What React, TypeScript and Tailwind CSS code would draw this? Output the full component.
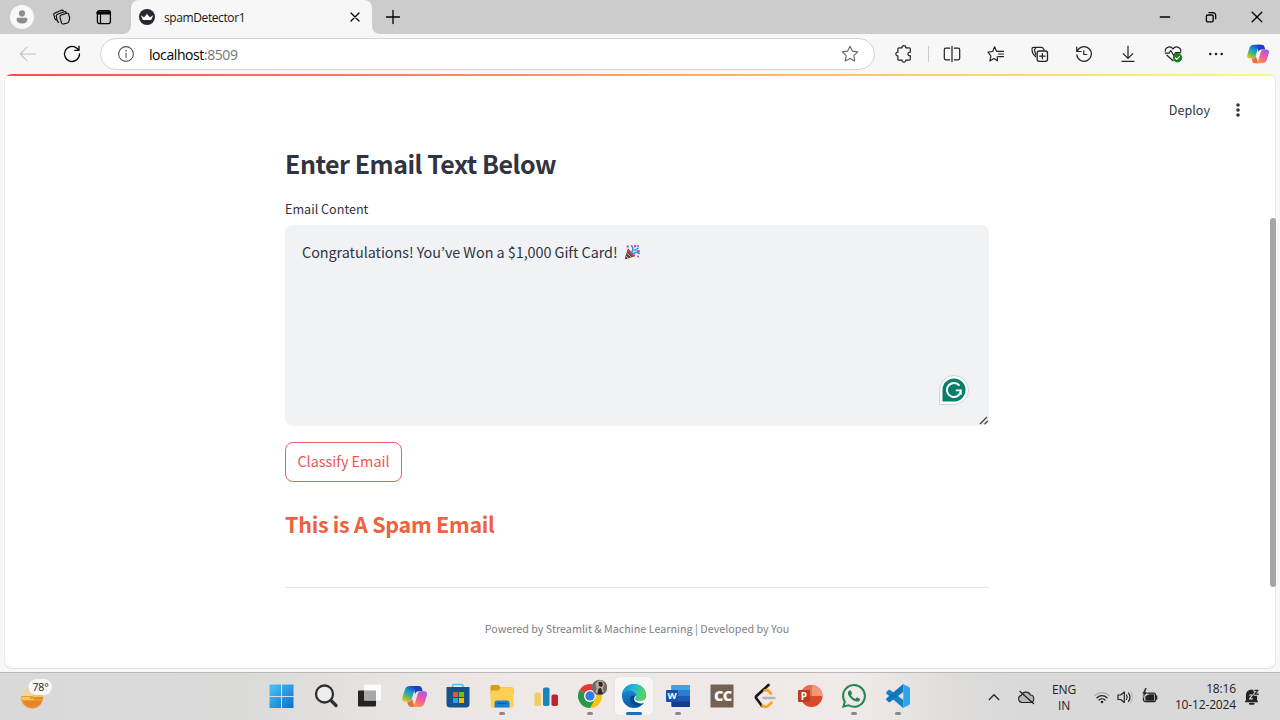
import React from "react";
import { BsWhatsapp } from "react-icons/bs";

type IconProps = { children: React.ReactNode; size?: number; className?: string; box?: string };

function Svg({ children, size = 20, className = "", box = "0 0 20 20" }: IconProps) {
  return (
    <svg
      width={size}
      height={size}
      viewBox={box}
      fill="none"
      stroke="currentColor"
      strokeWidth="1.1"
      strokeLinecap="round"
      strokeLinejoin="round"
      className={`block shrink-0 ${className}`}
    >
      {children}
    </svg>
  );
}

function Copilot({ size = 24, id }: { size?: number; id: string }) {
  return (
    <svg width={size} height={size} viewBox="0 0 24 24" className="block shrink-0">
      <defs>
        <linearGradient id={`${id}a`} x1="0.7" y1="0" x2="0.2" y2="1">
          <stop offset="0" stopColor="#1b45c4" />
          <stop offset="0.35" stopColor="#1593dc" />
          <stop offset="0.65" stopColor="#52b96a" />
          <stop offset="1" stopColor="#f3c418" />
        </linearGradient>
        <linearGradient id={`${id}b`} x1="0.8" y1="0" x2="0.3" y2="1">
          <stop offset="0" stopColor="#a25bf0" />
          <stop offset="0.5" stopColor="#ef5b9c" />
          <stop offset="1" stopColor="#fb9548" />
        </linearGradient>
      </defs>
      <path d="M13 2h3.300c1.400 0 2.300.8 2.700 2l.9 3h-4c-2 0-2.800 1-3.300 3L11 2z" fill="#1d3fc0" />
      <path d="M8.200 2h6.500c-1.500.4-2.100 1.500-2.600 3.200L9.500 14c-.6 2-1.700 3-3.700 3H3C.6 17-.3 15.300.4 12.800L2.700 5.500C3.500 3 5.200 2 8.200 2z" fill={`url(#${id}a)`} />
      <path d="M6 17c1.900 0 2.900-.8 3.500-3l2.800 8H8.700c-1.800 0-2.600-1-3.100-2.700L5 17z" fill="#ef6b42" />
      <path d="M16 22H9.700c1.500-.4 2.100-1.500 2.600-3.200L14.900 10c.6-2 1.700-3 3.700-3h2.600c2.400 0 3.300 1.700 2.600 4.200l-2.300 7.300C20.700 21 19 22 16 22z" fill={`url(#${id}b)`} />
    </svg>
  );
}

function TabStrip() {
  return (
    <div className="flex h-[34px] shrink-0 items-center bg-[#cccccc] text-black">
      <div className="ml-[10px] flex size-6 items-center justify-center rounded-full bg-[#f8f8f8] text-[#8c8c8c]">
        <Svg size={16} box="0 0 16 16">
          <circle cx="8" cy="4.400" r="3.100" fill="currentColor" stroke="none" />
          <path d="M2.600 10.400c0-1 .7-1.700 1.700-1.700h7.400c1 0 1.700.7 1.700 1.700 0 2.600-2.200 4-5.400 4s-5.400-1.400-5.400-4z" fill="currentColor" stroke="none" />
        </Svg>
      </div>
      <Svg size={18} className="ml-[19px]" box="0 0 18 18">
        <path d="M8.200 7.100l5.600-1.800c.9-.3 1.700.2 1.900 1l1 3.700-.9 3.700c-.2.700-.7 1.100-1.400 1.300L10.500 16c-.9.200-1.600-.1-1.900-.9l-1.500-5.300c-.3-1.300.1-2.300 1.100-2.700z" />
        <path d="M5.800 14.200c-.8 0-1.200-.5-1.400-1.200L3.300 8.600c-.3-1.100.1-2 1.100-2.400l7-2.500c.8-.3 1.500 0 1.800.8" />
        <path d="M3.300 11.900c-.8 0-1.200-.5-1.400-1.200l-1-3.400c-.3-1.100.1-2 1.100-2.400l6.500-2.700c.8-.3 1.500 0 1.900.8" />
      </Svg>
      <Svg size={16} className="ml-[25px]" box="0 0 16 16">
        <rect x="1.400" y="1.600" width="13" height="13" rx="2" strokeWidth="1.300" />
        <path d="M1.400 2.800h13v2.200h-13z" fill="currentColor" strokeWidth="1" />
        <path d="M4.500 5v9.500" strokeWidth="1.200" />
      </Svg>
      <div className="flex h-[34px] w-[268px] items-end pl-[11px]">
        <div className="size-2 shrink-0 bg-[#f7f7f7]"><div className="size-2 rounded-br-lg bg-[#cccccc]" /></div>
        <div className="flex h-[34px] w-[241px] items-center rounded-t-lg bg-[#f7f7f7] pl-2">
          <svg width="16" height="16" viewBox="0 0 16 16" className="block shrink-0">
            <circle cx="8" cy="8" r="8" fill="#252733" />
            <path d="M1.800 6.300l3.200 2 1.100-1.100L8 4.700l1.900 2.500L11 8.300l3.200-2-2 4.600H3.800z" fill="#fff" />
          </svg>
          <span className="ml-[9px] w-[185px] shrink-0 pt-px text-[12px] tracking-[-0.4px] text-[#151515]">spamDetector1</span>
          <Svg size={12} box="0 0 12 12"><path d="M2 2l8 8M10 2l-8 8" strokeWidth="1.300" /></Svg>
        </div>
        <div className="size-2 shrink-0 bg-[#f7f7f7]"><div className="size-2 rounded-bl-lg bg-[#cccccc]" /></div>
      </div>
      <Svg size={16} className="ml-[5px]" box="0 0 16 16"><path d="M8 1.500v13M1.500 8h13" strokeWidth="1.300" /></Svg>
      <div className="ml-auto flex items-center gap-[34px] pr-[17px]">
        <Svg size={12} box="0 0 12 12"><path d="M1.300 6h9.400" strokeWidth="1.300" /></Svg>
        <Svg size={12} box="0 0 12 12">
          <rect x="1.400" y="4" width="6.800" height="6.800" rx="1.300" strokeWidth="1.300" />
          <path d="M4 1.600h3.700c2 0 3 1.100 3 3v3.200" strokeWidth="1.200" />
        </Svg>
        <Svg size={12} box="0 0 12 12"><path d="M1.200 1.200l9.600 9.600M10.800 1.200l-9.600 9.600" strokeWidth="1.300" /></Svg>
      </div>
    </div>
  );
}

function ToolCell({ children }: { children: React.ReactNode }) {
  return <div className="flex w-11 shrink-0 justify-center">{children}</div>;
}

function Toolbar() {
  return (
    <div className="flex h-10 shrink-0 items-center bg-[#f7f7f7] text-[#222]">
      <Svg className="ml-[18px] text-[#c4c4c4]"><path d="M17.500 10H2.500M9 3.200L2.300 10 9 16.800" /></Svg>
      <Svg className="ml-6 text-black">
        <path d="M17.500 10a7.500 7.500 0 1 1-2.600-5.700L17 6.200M17 2.200v4.200h-4.200" strokeWidth="1.300" />
      </Svg>
      <div className="ml-[18px] flex h-8 w-[775px] items-center rounded-full border border-[#d3d3d3] bg-white pr-[14px] pl-[15px]">
        <Svg className="text-[#555]">
          <circle cx="10" cy="10" r="7.400" />
          <path d="M10 9v4.500" /><circle cx="10" cy="6.700" r=".5" fill="currentColor" strokeWidth=".5" />
        </Svg>
        <span className="ml-[13px] text-[14px] tracking-[-0.42px] text-black">localhost<span className="text-[#757575]">:8509</span></span>
        <Svg className="ml-auto text-[#666]">
          <path d="M10 2.200l2.350 4.900 5.350.75-3.900 3.750.95 5.350L10 14.400l-4.750 2.550.95-5.350L2.300 7.850l5.350-.75z" />
        </Svg>
      </div>
      <div className="ml-[19px]">
        <Svg>
          <path d="M5 3.800h3c-.5-2.800 4.300-2.800 3.800 0h3.400c.7 0 1.100.5 1.100 1.100v3.300c-3.200-.5-3.200 4 0 3.500v3.400c0 .7-.5 1.100-1.100 1.100h-3.400c.4 2.600-4.200 2.600-3.800 0H5c-.7 0-1.100-.5-1.100-1.100v-3.300c-2.700.4-2.700-4.100 0-3.700V4.900c0-.7.400-1.100 1.100-1.100z" strokeWidth="1.200" />
        </Svg>
      </div>
      <div className="ml-[14px] mr-[1px] h-4 w-px bg-[#c9c9c9]" />
      <ToolCell><Svg><path d="M7.700 4.200H3.800c-.9 0-1.500.6-1.500 1.500v8.600c0 .9.600 1.500 1.500 1.500h3.900M12.300 4.200h3.900c.9 0 1.500.6 1.500 1.500v8.600c0 .9-.6 1.500-1.500 1.500h-3.900M10 2.300v15.400" strokeWidth="1.200" /></Svg></ToolCell>
      <ToolCell><Svg><path d="M11.200 12.500l.3 4.300-3.600-2.200-4 2.300 1-4.900L2 8.200l4.700-.7L8.600 2.800l2.100 4.600h6.800M12.500 10h5M12.500 12.600h5" strokeWidth="1.200" /></Svg></ToolCell>
      <ToolCell><Svg><rect x="7.200" y="7" width="10.300" height="10.300" rx="2" strokeWidth="1.300" /><path d="M12.350 9.500v5.300M9.700 12.150H15M5.700 12.800L3 9.700C2.600 9 2 6.200 2 4.800c0-.9.700-1.500 1.500-1.500h8c1.200 0 2 .8 2.500 2.400M5.800 10.800L4.600 6.500c-.3-1 .1-1.700 1-2" strokeWidth="1.200" /></Svg></ToolCell>
      <ToolCell><Svg><path d="M3.200 7.400a7.300 7.300 0 1 1-.4 3.500M2.700 3v4.500h4.500M9.800 6.800v3.700h3" strokeWidth="1.200" /></Svg></ToolCell>
      <ToolCell><Svg><path d="M10 2.200v12M5.200 9.600l4.800 4.800 4.800-4.800M4 17.300h12" strokeWidth="1.200" /></Svg></ToolCell>
      <ToolCell><Svg className="ml-[2px]">
        <path d="M10 5C7.900 1.600 2.200 2.700 2.200 7.300M10 5c2.100-3.400 7.800-2.300 7.800 2.300M2.300 9.200H6l1.700-2.700 3 5 1.700-2.800h5.100M4 11.200l6 5.600" strokeWidth="1.200" />
        <circle cx="14.500" cy="13.800" r="4.700" fill="#16801f" stroke="none" /><path d="M12.300 14l1.400 1.400 2.900-3" stroke="#fff" />
      </Svg></ToolCell>
      <ToolCell><Svg><g fill="currentColor" stroke="none"><circle cx="4.300" cy="10" r="1.300" /><circle cx="10" cy="10" r="1.300" /><circle cx="15.700" cy="10" r="1.300" /></g></Svg></ToolCell>
      <div className="ml-[9px]"><Copilot size={22} id="t" /></div>
    </div>
  );
}

function Party() {
  return (
    <svg width="17" height="16" viewBox="0 0 17 16" className="ml-[6px] block shrink-0">
      <path d="M4 4.500L11.500 12 1.500 15.300.8 14.500z" fill="#4b4250" />
      <path d="M4 4.500l7.500 7.500-2.700.8L3.200 7.500z" fill="#b8475a" />
      <path d="M2.500 8.800L7.600 13.400M1.700 12l2.900 2.400" stroke="#e9b45c" strokeWidth="1" />
      <path d="M7.300 8.600C9.500 7 9.400 4 7.600 1.800M9.500 10c1.500-1.900 3.800-1.800 5.900-.6" stroke="#269be3" strokeWidth="1.700" fill="none" strokeLinecap="round" />
      <path d="M10.200 6.300c2 .2 2.200-1.800 4.500-2.200" stroke="#269be3" strokeWidth="1.500" fill="none" />
      <path d="M3.500 1.500l.4 2M11.500 1l-.7 2.300M15.700 7l-2.800.3" stroke="#e8368f" strokeWidth="2" />
      <circle cx="14" cy="2" r=".9" fill="#6b52ce" /><circle cx="14" cy="12.500" r="1" fill="#e8368f" />
    </svg>
  );
}

function Page() {
  return (
    <div className="flex h-[598px] shrink-0 flex-col bg-[#f7f7f7] px-1 pb-[3px]">
      <div className="flex h-[595px] flex-col overflow-hidden rounded-lg border-b border-[#dedede] bg-white font-['Noto_Sans_CJK_KR',sans-serif] text-[#31333f] shadow-[inset_1px_0_#ebebeb,inset_-1px_0_#e8e8e8]">
        <div className="h-[2px] shrink-0 bg-[linear-gradient(90deg,#ff4b4b_0%,#f19468_40%,#ffcb72_72%,#fafa85_100%)]" />
        <div className="flex min-h-0 flex-1">
          <div className="flex flex-1 flex-col">
            <header className="flex h-[68px] shrink-0 items-center justify-end gap-[19px] pr-[23px]">
              <span className="text-[12.600px]">Deploy</span>
              <svg width="18" height="18" viewBox="0 0 18 18" fill="currentColor" className="block"><circle cx="9" cy="4" r="1.800" /><circle cx="9" cy="9" r="1.800" /><circle cx="9" cy="14" r="1.800" /></svg>
            </header>
            <main className="ml-[281px] flex w-[704px] flex-col items-start">
              <h3 className="mt-[1px] text-[25px] leading-9 font-bold tracking-[-0.48px]">Enter Email Text Below</h3>
              <label className="mt-[17px] text-[12.600px] leading-[22px]">Email Content</label>
              <div className="mt-[5px] flex h-[201px] w-[704px] flex-col justify-between rounded-lg bg-[#f0f2f6] pt-[15px] pl-[17px]">
                <div className="flex h-6 items-center text-[14.400px] leading-6">
                  <span className="tracking-[-0.05px] whitespace-nowrap">Congratulations! You’ve Won a $1,000 Gift Card!</span>
                  <Party />
                </div>
                <div className="flex items-end justify-end">
                  <svg width="32" height="32" viewBox="0 0 32 32" className="mr-[7px] mb-[20px] block">
                    <path d="M1.500 30.500V16a14.500 14.500 0 1 1 14.500 14.500z" fill="#fff" stroke="#d0d4d8" strokeWidth="1" />
                    <path d="M4.500 27.500V16a11.500 11.500 0 1 1 11.500 11.500z" fill="#087f6c" />
                    <path d="M21.500 11.800a7 7 0 1 0 1.400 4.600h-5.100M22.800 16.400v4.300" fill="none" stroke="#fff" strokeWidth="1.900" />
                  </svg>
                  <svg width="12" height="12" viewBox="0 0 12 12" className="block"><path d="M3 10l7-7M7.500 10.200L10.700 7" stroke="#444" strokeWidth="1.300" /></svg>
                </div>
              </div>
              <button className="mt-4 flex h-10 w-[117px] items-center justify-center rounded-lg border border-[#ee5b5b] pb-[2px] text-[14.400px] whitespace-nowrap text-[#ee5554]">Classify Email</button>
              <h4 className="mt-[26px] text-[21.500px] leading-8 font-bold tracking-[-0.28px] text-[#f0603c]">This is A Spam Email</h4>
              <hr className="mt-[47px] w-full border-[#e5e5e8]" />
              <p className="mt-[31px] w-full text-center text-[10.750px] leading-5 text-[#808080]">Powered by Streamlit &amp; Machine Learning | Developed by You</p>
            </main>
          </div>
          <div className="w-[6px] pt-[142px]"><div className="h-[369px] w-[6px] rounded-full bg-[#a5a5a8]" /></div>
        </div>
      </div>
    </div>
  );
}

function App24({ children }: { children: React.ReactNode }) {
  return <svg width="26" height="26" viewBox="0 0 26 26" className="block">{children}</svg>;
}

type Task = { name: string; mark?: "run" | "active"; icon: React.ReactNode };

const tasks: Task[] = [
  { name: "start", icon: <App24><defs><linearGradient id="win" x1="0" y1="0" x2="1" y2="1" gradientUnits="objectBoundingBox"><stop offset="0" stopColor="#4fc4f4" /><stop offset="1" stopColor="#0871cf" /></linearGradient></defs><path d="M.5 1.500h11.500v11.500H.5zM13 1.500h11.500v11.500H13zM.5 14h11.500v11H.5zM13 14h11.500v11H13z" fill="url(#win)" /></App24> },
  { name: "search", icon: <App24><circle cx="11.500" cy="11" r="8.500" fill="#eeeeee" stroke="#303030" strokeWidth="2.300" /><path d="M18 17.500l5 5" stroke="#303030" strokeWidth="3.200" strokeLinecap="round" /></App24> },
  { name: "taskview", icon: <App24><rect x="1" y="7.500" width="18" height="16" rx="1" fill="#242424" /><rect x="7" y="1.500" width="17" height="16" rx="1" fill="#fff" fillOpacity=".88" /><path d="M7 7.500h12v10H7z" fill="#a9a9a9" /></App24> },
  { name: "copilot", icon: <Copilot size={25} id="b" /> },
  { name: "store", icon: <App24><path d="M7.500 5V3q0-1.500 1.500-1.500h7.500Q18 1.500 18 3v2" fill="none" stroke="#43c4ea" strokeWidth="1.500" /><path d="M1.500 4h23v17q0 3.500-3.500 3.500H5q-3.500 0-3.500-3.500z" fill="#16518e" /><path d="M8 9h5v5H8z" fill="#f35325" /><path d="M14 9h5v5h-5z" fill="#81bc06" /><path d="M8 15h5v5H8z" fill="#20a5f0" /><path d="M14 15h5v5h-5z" fill="#ffba08" /></App24> },
  { name: "files", mark: "run", icon: <App24><path d="M1.500 3.500q0-1.500 1.500-1.500h6.500l2 2.500H23q1.500 0 1.500 1.500v5h-23z" fill="#d49c18" /><path d="M1.500 7.500h8l2.500-3h11q1.500 0 1.500 1.500v17q0 1.500-1.500 1.500H3q-1.500 0-1.500-1.500z" fill="#fdcf55" /><path d="M5.500 24.500V20q0-2.500 2.500-2.500h10q2.500 0 2.500 2.500v4.500z" fill="#167fd4" /><path d="M8.500 20.500h9" stroke="#0b5298" /></App24> },
  { name: "charts", icon: <App24><rect x="1.500" y="9.500" width="6.500" height="13.500" rx="1.800" fill="#f1cc62" /><rect x="10" y="4.500" width="6.500" height="18.500" rx="1.800" fill="#1985bd" /><rect x="18.500" y="11.500" width="6.500" height="11.500" rx="1.800" fill="#bb2532" /></App24> },
  { name: "chrome", mark: "run", icon: (
    <svg width="34" height="34" viewBox="-4 -4 34 34" className="block">
      <path d="M13 13L2.600 7A12 12 0 0 1 23.400 7z" fill="#e33b2e" /><path d="M13 13V7h10.400A12 12 0 0 1 13 25z" fill="#fbc116" /><path d="M13 13l5.200 3L13 25A12 12 0 0 1 2.600 7z" fill="#279847" />
      <circle cx="13" cy="13" r="6" fill="#fff" /><circle cx="13" cy="13" r="4.700" fill="#347de0" />
      <circle cx="22.500" cy="4.500" r="7.800" fill="#756a64" /><path d="M18.500 10l1-5-1-4 2.500-3.500h4l2.500 4-1.500 3 .5 5z" fill="#b8a891" /><path d="M21.500-1h3.500l1 3-1.500 2-2.500-1zM20.500 11l1-5.500 2.500-.5 2 6z" fill="#262a35" />
    </svg>
  ) },
  { name: "edge", mark: "active", icon: <App24><defs><linearGradient id="eg" x1="0" y1="0" x2="1" y2=".3"><stop offset="0" stopColor="#1388d5" /><stop offset=".5" stopColor="#26b8d8" /><stop offset="1" stopColor="#54d65c" /></linearGradient><linearGradient id="eb" x1="0" y1="0" x2="0" y2="1"><stop offset="0" stopColor="#1a9ae0" /><stop offset="1" stopColor="#0b55a5" /></linearGradient></defs><circle cx="13" cy="13" r="12" fill="url(#eb)" /><path d="M1 12C1.600 5.500 6.700 1 13 1c7 0 12 5 12 10.500 0 4-3 6.500-6.500 6.500-3 0-4.200-1-4.200-1.900 0-.8 1.100-1.100 1.100-3C15.400 10 12 7.500 8.500 7.500 5 7.500 2 9.500 1 12z" fill="url(#eg)" /><path d="M9.200 15c-.8 5 4.300 8.500 8.600 7.700 2.700-.5 5-2 6-3.400-3 1.500-6 1.600-8.600.2-2.500-1.400-3-4.500-1.400-6.400-1.700-1.300-4.100-.6-4.600 1.900z" fill="#08478e" /><path d="M15.400 12.500c0 1.900-1.100 2.500-1.100 3.600 0 1.200 1.700 1.900 4.200 1.900 2.800 0 5-1.100 6.200-3.300l2.300 1.800-2.700 3c-2.300 1.200-6.500 1.300-9.200-.4-2.400-1.500-2.800-5.100.3-6.600z" fill="#f8f8f8" /></App24> },
  { name: "word", mark: "run", icon: <App24><rect x="6.500" y="2" width="18.500" height="22" rx="1.300" fill="#1b59b6" /><path d="M6.500 7.500V3.300Q6.500 2 7.800 2h15.900Q25 2 25 3.300v4.200z" fill="#42a2e8" /><path d="M6.500 7.500H25V13H6.500z" fill="#2c7ed5" /><path d="M6.500 18.500H25v4.200q0 1.300-1.300 1.300H7.800q-1.300 0-1.300-1.300z" fill="#153d8a" /><rect x="1" y="7" width="12" height="12" rx="1" fill="#194fae" /><text x="7" y="16.300" textAnchor="middle" fontSize="9.500" fontWeight="700" fill="#fff">W</text></App24> },
  { name: "captions", icon: <App24><path d="M1.500 1.500h23v23h-23z" fill="#756151" /><text x="13.700" y="18.300" textAnchor="middle" fontSize="14.500" letterSpacing="-.8" fontWeight="800" fill="#fff">CC</text></App24> },
  { name: "leetcode", icon: <App24><path d="M15.500 2L3.500 13q-1.200 1.200 0 2.500l5.500 7.500" fill="none" stroke="#171717" strokeWidth="2.600" strokeLinecap="round" /><path d="M11.500 7.500l3-.5 3.500 3.500M9.500 22.500q2.500 2.500 5 .7l4-3.500" fill="none" stroke="#f6a51c" strokeWidth="2.600" strokeLinecap="round" /><path d="M10.500 15h11" stroke="#b3b3b3" strokeWidth="2.300" strokeLinecap="round" /></App24> },
  { name: "powerpoint", icon: <App24><circle cx="14.500" cy="13" r="11" fill="#d74b2c" /><path d="M14.500 2a11 11 0 0 1 11 11h-11z" fill="#f49679" /><path d="M14.500 2v11h-11a11 11 0 0 1 11-11z" fill="#ec6b4c" /><rect x="1" y="7" width="12" height="12" rx="1" fill="#bd3d20" /><text x="7" y="16.500" textAnchor="middle" fontSize="10" fontWeight="700" fill="#fff">P</text></App24> },
  { name: "whatsapp", mark: "run", icon: <BsWhatsapp size={24} color="#218653" /> },
  { name: "code", mark: "run", icon: <App24><path d="M1.500 9l2-1.900c.5-.4 1-.4 1.500 0L18.300 17v7.500c-.6 0-1.100-.2-1.600-.7L1.500 10.700c-.6-.6-.6-1.100 0-1.700z" fill="#1681c9" /><path d="M1.500 17l2 1.900c.5.400 1 .4 1.500 0L18.300 9V1.500c-.6 0-1.100.2-1.600.7L1.500 15.300c-.6.6-.6 1.100 0 1.700z" fill="#1176bb" /><path d="M18.300 1.300L24 4c.7.300 1 .8 1 1.500v15c0 .7-.3 1.200-1 1.500l-5.700 2.800c-.8.300-1.500.1-2-.5 1 .6 2 0 2-1.200V3c0-1.200-1-1.700-2-1 .5-.7 1.200-1 2-.7z" fill="#2ca5e9" /></App24> },
];

function Taskbar() {
  return (
    <div className="flex h-12 shrink-0 border-t border-[#b8b8b8] bg-[linear-gradient(90deg,#d9d9d9_0,#dadad9_240px,#e8e4e1_400px,#eee9e6_520px,#efe9e7_860px,#dddcdb_960px,#d9d9d9_1020px)] text-[#222]">
      <div className="flex w-[260px] pl-5">
        <svg width="34" height="34" viewBox="0 0 34 34" className="mt-[5px] block">
          <path d="M4 11h10v8H4z" fill="#ead9a4" /><path d="M1 18h22a11 11 0 0 1-22 3z" fill="#e99a2d" />
          <path d="M3 23h19c-2 4-5 6-9.500 6S5 27 3 23z" fill="#e9822b" /><path d="M1 19h12v-3h10v3H14v3H2z" fill="#f3c65e" /><path d="M10 20h13" stroke="#c98519" />
          <rect x="8.500" y="1" width="23.500" height="16" rx="8" fill="#f7f7f7" />
          <text x="20.500" y="12.800" textAnchor="middle" fontSize="10.500" letterSpacing="-.2" fill="#222">78°</text>
        </svg>
      </div>
      {tasks.map((t) => (
        <div key={t.name} className="flex w-11 shrink-0 justify-center pt-1">
          <div className={`flex h-[38px] w-[38px] flex-col items-center rounded-[4px] ${t.mark === "active" ? "bg-[#f8f6f5] shadow-[0_0_1px_#bbb]" : ""}`}>
            <div className="flex h-[35px] items-center justify-center pt-[3px]">{t.icon}</div>
            {t.mark === "run" && <div className="h-[3px] w-[6px] shrink-0 rounded-full bg-[#8b8886]" />}
            {t.mark === "active" && <div className="h-[3px] w-4 shrink-0 rounded-full bg-[#1474c4]" />}
          </div>
        </div>
      ))}
      <div className="ml-auto flex h-[47px] items-center pr-[20px]">
        <Svg size={14} box="0 0 14 14"><path d="M2.300 9.500L7 4.800l4.700 4.700" strokeWidth="1.300" /></Svg>
        <Svg size={18} className="ml-[16px]" box="0 0 18 18"><path d="M5 14.500a3.600 3.600 0 0 1-.6-7.100C5.600 3.600 11.600 2.700 13.400 7c4.300 0 4.600 7.500.2 7.500z" fill="#b8b8b8" /><path d="M3 3.500l13.500 12" strokeWidth="1.300" /></Svg>
        <div className="ml-[13px] w-8 pt-[2px] text-center text-[12px] leading-4 tracking-[-0.2px]">ENG<br />IN</div>
        <Svg size={16} className="ml-[14px]" box="0 0 16 16">
          <path d="M1 6.500a10 10 0 0 1 14 0" stroke="#aaa" /><path d="M3 8.700a7 7 0 0 1 10 0M5 11a4.300 4.300 0 0 1 6 0" strokeWidth="1.300" /><circle cx="8" cy="13" r="1.300" fill="currentColor" stroke="none" />
        </Svg>
        <Svg size={16} className="ml-[7px]" box="0 0 16 16"><path d="M1 6h2.600L7.300 3v10.500L3.600 10.500H1zM9.500 6q1.600 2.200 0 4.500M11.500 4q3 4.200 0 8.500" strokeWidth="1.200" /><path d="M13.500 2.300q4 6 0 11.700" stroke="#bbb" /></Svg>
        <Svg size={18} className="ml-[8px]" box="0 0 18 18"><rect x="2.500" y="5.200" width="12" height="8.500" rx="2" strokeWidth="1.300" /><path d="M5 8.500l3-1.500h4.500v5H5zM15.700 8v3" fill="currentColor" strokeWidth="1.300" /><path d="M4 0L1 6h2L2.600 9.500 6.500 4H4.500L6 0z" fill="currentColor" stroke="#d9d9d9" strokeWidth=".6" /></Svg>
        <div className="ml-[13px] w-[64px] text-right text-[12px] leading-4 tracking-[-0.15px] whitespace-nowrap">18:16<br />10-12-2024</div>
        <Svg size={16} className="ml-2" box="0 0 16 16"><path d="M2.500 11.300V6a5 5 0 0 1 10 0v5.300l1 1.500h-12z" fill="currentColor" /><path d="M6 14.800h3.500" strokeWidth="2" /><path d="M5.500 6h3L5.500 9.800h3" stroke="#ddd" strokeWidth="1.200" /><path d="M10.800 1.300h3.200l-3.200 3.900h3.500" stroke="#d9d9d9" strokeWidth="3.200" /><path d="M10.800 1.300h3.200l-3.200 3.900h3.500" strokeWidth="1.200" /></Svg>
      </div>
    </div>
  );
}

export default function App() {
  return (
    <div className="flex h-[720px] w-[1280px] flex-col overflow-hidden font-['Open_Sans','Noto_Sans',sans-serif]">
      <TabStrip />
      <Toolbar />
      <Page />
      <Taskbar />
    </div>
  );
}
